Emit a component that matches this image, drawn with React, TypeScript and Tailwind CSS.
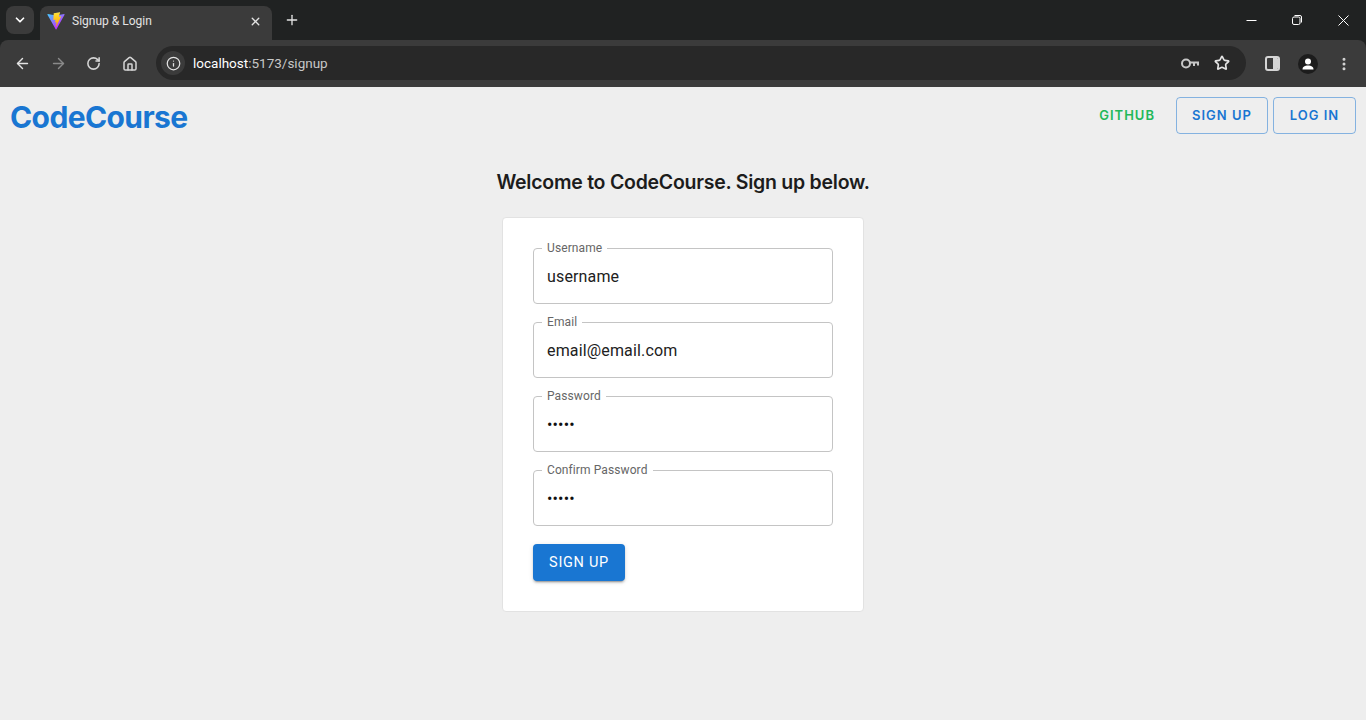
import React from 'react';
import { ArrowLeft, ArrowRight, RotateCw, Home, Info, Star, EllipsisVertical, ChevronDown, X, Plus } from 'lucide-react';

const FIELDS = [
  { label: 'Username', value: 'username' },
  { label: 'Email', value: 'email@email.com' },
  { label: 'Password', value: '•••••', secret: true },
  { label: 'Confirm Password', value: '•••••', secret: true },
];

function ViteLogo() {
  return (
    <svg width="18" height="18" viewBox="0 0 410 404" fill="none">
      <defs>
        <linearGradient id="viteBody" x1="6" y1="33" x2="235" y2="344" gradientUnits="userSpaceOnUse">
          <stop stopColor="#41D1FF" />
          <stop offset="1" stopColor="#BD34FE" />
        </linearGradient>
        <linearGradient id="viteBolt" x1="194" y1="8" x2="236" y2="292" gradientUnits="userSpaceOnUse">
          <stop stopColor="#FFEA83" />
          <stop offset="0.08" stopColor="#FFDD35" />
          <stop offset="1" stopColor="#FFA800" />
        </linearGradient>
      </defs>
      <path
        d="M399.641 59.5246L215.643 388.545C211.844 395.338 202.084 395.378 198.228 388.618L10.5817 59.5563C6.38087 52.1896 12.6802 43.2665 21.0281 44.7586L205.223 77.6824C206.398 77.8924 207.601 77.8904 208.776 77.6763L389.119 44.8058C397.439 43.2894 403.768 52.1434 399.641 59.5246Z"
        fill="url(#viteBody)"
      />
      <path
        d="M292.965 1.5744L156.801 28.2552C154.563 28.6937 152.906 30.5903 152.771 32.8664L144.395 174.33C144.198 177.662 147.258 180.248 150.51 179.498L188.42 170.749C191.967 169.931 195.172 173.055 194.443 176.622L183.18 231.775C182.422 235.487 185.907 238.661 189.532 237.56L212.947 230.446C216.577 229.344 220.065 232.527 219.297 236.242L201.398 322.875C200.278 328.294 207.486 331.249 210.492 326.603L212.5 323.5L323.454 102.072C325.312 98.3645 322.108 94.137 318.036 94.9228L279.014 102.454C275.347 103.161 272.227 99.746 273.262 96.1583L298.731 7.86689C299.767 4.27314 296.636 0.855181 292.965 1.5744Z"
        fill="url(#viteBolt)"
      />
    </svg>
  );
}

function BrowserChrome() {
  return (
    <div className="bg-[#202222] font-['Roboto',sans-serif]">
      <div className="flex h-10 items-end pl-[6px]">
        <div className="mb-[6px] flex h-7 w-7 items-center justify-center rounded-lg bg-[#3b3b3b] text-white">
          <ChevronDown size={14} strokeWidth={3} />
        </div>
        <div className="ml-[6px] flex h-[34px] w-[232px] items-center rounded-t-lg bg-[#3b3b3b] pb-1 pl-[7px] pr-[10px]">
          <ViteLogo />
          <span className="ml-[7px] text-xs text-[#e3e3e3]">Signup &amp; Login</span>
          <X size={13} strokeWidth={2.5} className="ml-auto text-[#e3e3e3]" />
        </div>
        <div className="mb-[6px] ml-[12px] flex h-7 items-center text-[#e3e3e3]">
          <Plus size={16} strokeWidth={2} />
        </div>
        <div className="ml-auto flex h-10 items-center text-white">
          <div className="flex w-[46px] justify-center">
            <svg width="11" height="11" viewBox="0 0 11 11" stroke="currentColor">
              <path d="M0.5 5.5 H10.5" />
            </svg>
          </div>
          <div className="flex w-[46px] justify-center">
            <svg width="12" height="12" viewBox="0 0 12 12" fill="none" stroke="currentColor">
              <rect x="1.5" y="3" width="7.5" height="7.5" rx="1.5" />
              <path d="M3.5 1.5 H9 A1.5 1.5 0 0 1 10.5 3 V8.5" />
            </svg>
          </div>
          <div className="flex w-[46px] justify-center">
            <svg width="11" height="11" viewBox="0 0 11 11" stroke="currentColor">
              <path d="M0.5 0.5 L10.5 10.5 M10.5 0.5 L0.5 10.5" />
            </svg>
          </div>
        </div>
      </div>
      <div className="flex h-[47px] items-center rounded-tl-lg rounded-tr-lg bg-[#3b3b3b] pl-[14px] pr-[14px]">
        <ArrowLeft size={17} strokeWidth={2} className="text-[#e3e3e3]" />
        <ArrowRight size={17} strokeWidth={2} className="ml-[19px] text-[#8a8a8a]" />
        <RotateCw size={15} strokeWidth={2.5} className="ml-[19px] text-[#d5d5d5]" />
        <Home size={16} strokeWidth={2.25} className="ml-[21px] text-[#d5d5d5]" />
        <div className="ml-[18px] -mt-px flex h-[34px] flex-1 items-center rounded-full bg-[#282828] pl-[5px] pr-[16px]">
          <div className="flex h-6 w-6 items-center justify-center rounded-full bg-[#3b3b3b] text-[#e3e3e3]">
            <Info size={15} strokeWidth={2} />
          </div>
          <span className="ml-[8px] text-[13.5px] text-[#c7c7c7]">
            <span className="text-white">localhost</span>:5173/signup
          </span>
          <svg width="18" height="11" viewBox="0 0 18 11" fill="none" stroke="#c7c7c7" strokeWidth="2" className="ml-auto">
            <circle cx="5" cy="5.5" r="4" />
            <path d="M9 4.5 H17 V7.5 M13 4.5 V8" />
          </svg>
          <Star size={16} strokeWidth={2.5} className="ml-[15px] text-[#e3e3e3]" />
        </div>
        <div className="ml-[19px] flex h-[15px] w-[15px] overflow-hidden rounded-[3px] border-2 border-[#d5d5d5]">
          <div className="w-1/2" />
          <div className="w-1/2 bg-[#d5d5d5]" />
        </div>
        <div className="ml-[18px] flex h-5 w-5 items-center justify-center rounded-full bg-[#1c1c1c]">
          <svg width="14" height="14" viewBox="0 0 14 14" fill="#fff">
            <circle cx="7" cy="4.5" r="3" />
            <path d="M1.5 12.5 C1.5 9.5 4 8.5 7 8.5 C10 8.5 12.5 9.5 12.5 12.5 Z" />
          </svg>
        </div>
        <EllipsisVertical size={16} strokeWidth={2.5} className="ml-[18px] text-[#d5d5d5]" />
      </div>
    </div>
  );
}

function OutlinedField({ label, value, secret }: { label: string; value: string; secret?: boolean }) {
  return (
    <fieldset className="h-[62px] w-[300px] rounded border border-[#c4c4c4] pl-[8px] pr-[13px] leading-none">
      <legend className="px-[5px] text-xs leading-none tracking-[0.1px] text-[#666666]">{label}</legend>
      <div className={`flex h-[45px] items-center pl-[5px] text-base tracking-[0.15px] ${secret ? 'text-[#111111]' : 'text-[#212121]'}`}>
        {value}
      </div>
    </fieldset>
  );
}

export default function App() {
  return (
    <div className="flex min-h-screen flex-col bg-[#eeeeee] font-['Roboto',sans-serif]">
      <BrowserChrome />

      <header className="flex h-[62px] items-center justify-between pl-[10px] pr-[10px] font-['Inter',sans-serif]">
        <span className="-mt-[2px] text-[30px] font-bold tracking-[-0.6px] text-[#1976d2]">CodeCourse</span>
        <nav className="-mt-[6px] flex items-center text-[13px] font-semibold tracking-[1px]">
          <a className="mr-[21px] pt-[2px] text-[#22b85a]">GITHUB</a>
          <a className="flex h-[37px] w-[92px] items-center justify-center rounded border border-[#1976d2]/50 pt-[2px] text-[#1976d2]">SIGN UP</a>
          <a className="ml-[5px] flex h-[37px] w-[83px] items-center justify-center rounded border border-[#1976d2]/50 pt-[2px] text-[#1976d2]">LOG IN</a>
        </nav>
      </header>

      <main className="flex flex-col items-center">
        <h1 className="mt-[19px] font-['Inter',sans-serif] text-[19.5px] font-semibold leading-7 tracking-[-0.25px] text-[#1c1c1c]">
          Welcome to CodeCourse. Sign up below.
        </h1>
        <form className="mt-[21px] flex h-[395px] w-[362px] flex-col gap-3 rounded border border-[#e2e2e2] bg-white px-[30px] pt-6">
          {FIELDS.map((f) => (
            <OutlinedField key={f.label} label={f.label} value={f.value} secret={f.secret} />
          ))}
          <button
            type="button"
            className="mt-[6px] h-[37px] w-[92px] rounded bg-[#1976d2] text-[14.5px] tracking-[0.7px] text-white shadow-[0_3px_1px_-2px_rgba(0,0,0,0.2),0_2px_2px_0_rgba(0,0,0,0.14),0_1px_5px_0_rgba(0,0,0,0.12)]"
          >
            SIGN UP
          </button>
        </form>
      </main>
    </div>
  );
}
